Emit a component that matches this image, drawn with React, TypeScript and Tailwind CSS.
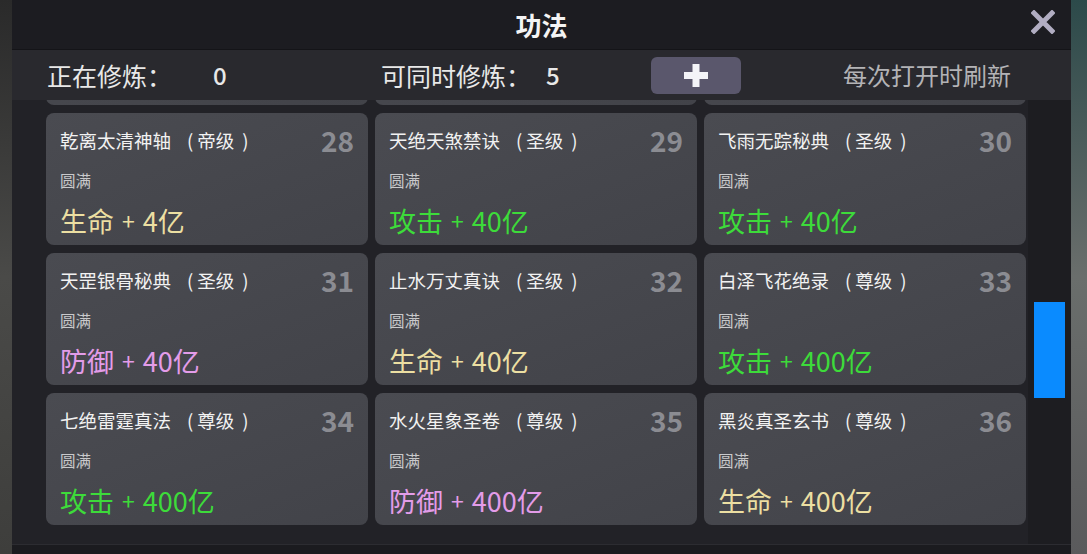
import React from "react";

type Card = { no: number; name: string; grade: string; stat: string; val: string; color: string };

const Y = "text-[#ecdfa2]";
const G = "text-[#3ddb3a]";
const P = "text-[#e39ce9]";

const rows: Card[][] = [
  [
    { no: 25, name: "玄天九转真经", grade: "帝级", stat: "生命", val: "4亿", color: Y },
    { no: 26, name: "太虚玄玉秘典", grade: "帝级", stat: "攻击", val: "4亿", color: G },
    { no: 27, name: "紫霄神雷宝录", grade: "帝级", stat: "防御", val: "4亿", color: P },
  ],
  [
    { no: 28, name: "乾离太清神轴", grade: "帝级", stat: "生命", val: "4亿", color: Y },
    { no: 29, name: "天绝天煞禁诀", grade: "圣级", stat: "攻击", val: "40亿", color: G },
    { no: 30, name: "飞雨无踪秘典", grade: "圣级", stat: "攻击", val: "40亿", color: G },
  ],
  [
    { no: 31, name: "天罡银骨秘典", grade: "圣级", stat: "防御", val: "40亿", color: P },
    { no: 32, name: "止水万丈真诀", grade: "圣级", stat: "生命", val: "40亿", color: Y },
    { no: 33, name: "白泽飞花绝录", grade: "尊级", stat: "攻击", val: "400亿", color: G },
  ],
  [
    { no: 34, name: "七绝雷霆真法", grade: "尊级", stat: "攻击", val: "400亿", color: G },
    { no: 35, name: "水火星象圣卷", grade: "尊级", stat: "防御", val: "400亿", color: P },
    { no: 36, name: "黑炎真圣玄书", grade: "尊级", stat: "生命", val: "400亿", color: Y },
  ],
];

function CardView({ c }: { c: Card }) {
  return (
    <div className="w-[322px] h-[132px] shrink-0 rounded-[8px] bg-gradient-to-br from-[#4a4b51] to-[#424349] px-[14px] pt-[12px] flex flex-col">
      <div className="h-[30px] flex items-center justify-between">
        <div className="text-[18.5px] text-[#f2f2f2] leading-none whitespace-nowrap flex items-center">
          <span>{c.name}</span>
          <span className="ml-[16px]">(</span>
          <span className="ml-[4px]">{c.grade}</span>
          <span className="ml-[8px]">)</span>
        </div>
        <div className="text-[28px] font-bold text-[#8b8c92] leading-none">{c.no}</div>
      </div>
      <div className="mt-[16px] h-[20px] flex items-center text-[15.5px] text-[#c9c9cb] leading-none">圆满</div>
      <div className={`mt-[12px] h-[34px] flex items-center text-[27px] leading-none whitespace-nowrap ${c.color}`}>
        <span>{c.stat}</span>
        <span className="ml-[8px] text-[23px]">+</span>
        <span className="ml-[8px]">{c.val}</span>
      </div>
    </div>
  );
}

export default function App() {
  return (
    <div
      className="w-[1087px] h-[554px] flex overflow-hidden bg-[#3a3a3a]"
      style={{ fontFamily: '"Noto Sans CJK SC", "Noto Sans", sans-serif' }}
    >
      {/* left game background strip */}
      <div className="w-[12px] h-full bg-gradient-to-b from-[#2a2a2a] via-[#4a4a48] to-[#3e3e3c]" />

      {/* dialog */}
      <div className="w-[1059px] h-full flex flex-col bg-[#222227]">
        {/* title bar */}
        <div className="h-[49px] bg-[#1c1c21] flex items-center relative">
          <div className="w-full text-center text-[26px] font-bold text-[#f4f4f4] leading-none">功法</div>
          <svg className="absolute left-[1019px] top-[10px]" width="24" height="24" viewBox="0 0 24 24">
            <path d="M3 3 L21 21 M21 3 L3 21" stroke="#b1adc2" strokeWidth="5" strokeLinecap="square" />
          </svg>
        </div>
        <div className="h-px bg-[#141418]" />
        {/* header row */}
        <div className="h-[50px] bg-[#29292e] flex items-center pl-[35px] pr-[60px]">
          <span className="w-[166px] text-[25px] text-[#e8e8e8] leading-none">正在修炼：</span>
          <span className="w-[168px] text-[24px] text-[#e8e8e8] leading-none font-medium">0</span>
          <span className="w-[165px] text-[25px] text-[#e8e8e8] leading-none">可同时修炼：</span>
          <span className="w-[105px] text-[24px] text-[#e8e8e8] leading-none font-medium">5</span>
          <div className="w-[90px] h-[37px] rounded-[6px] bg-[#5a576c] flex items-center justify-center">
            <svg width="24" height="23" viewBox="0 0 24 23">
              <rect x="0" y="8" width="24" height="7" fill="#f4f4f8" />
              <rect x="8.5" y="0" width="7" height="23" fill="#f4f4f8" />
            </svg>
          </div>
          <span className="ml-auto text-[24px] text-[#b3b3b6] leading-none">每次打开时刷新</span>
        </div>
        {/* body */}
        <div className="flex-1 flex min-h-0">
          <div className="w-[1016px] h-full overflow-hidden pl-[34px] bg-[#222227]">
            <div className="mt-[-127px] flex flex-col gap-[8px]">
              {rows.map((r, i) => (
                <div key={i} className="flex gap-[7px]">
                  {r.map((c) => (
                    <CardView key={c.no} c={c} />
                  ))}
                </div>
              ))}
            </div>
          </div>
          <div className="w-[43px] h-full bg-[#1d1d21] pl-[6px] pt-[202px]">
            <div className="w-[31px] h-[96px] bg-[#0a8bff]" />
          </div>
        </div>
        <div className="h-[10px] bg-[#1b1b1f] border-t border-[#2c2c31]" />
      </div>

      {/* right game background strip */}
      <div className="w-[16px] h-full bg-gradient-to-b from-[#2c4a4a] via-[#6a6e6c] to-[#5a5a5c]" />
    </div>
  );
}
